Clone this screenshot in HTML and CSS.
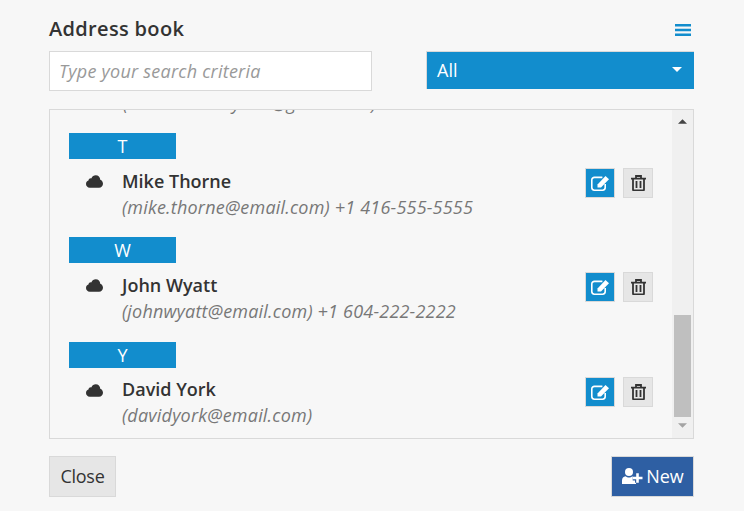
FILE: index.html
```html
<!DOCTYPE html>
<html lang="en">
<head>
<meta charset="utf-8">
<title>Address book</title>
<link rel="stylesheet" href="styles.css">
</head>
<body>
<div class="header">
  <h1 class="title">Address book</h1>
  <svg class="menu" viewBox="0 0 16 14" width="16" height="14"><path d="M0 1h16v2.400H0zM0 5.800h16v2.400H0zM0 10.600h16V13H0z" fill="#128dcd"/></svg>
</div>
<div class="filters">
  <input class="search" type="text" placeholder="Type your search criteria">
  <div class="select"><span>All</span><svg viewBox="0 0 10 5" width="10" height="5"><path d="M0 0h10L5 5z" fill="#fff"/></svg></div>
</div>
<div class="listbox">
  <div class="list">
    <div class="clipped">(daniel.lindsayhall@gmail.com)</div>
    <div class="group">
      <div class="letter">T</div>
      <div class="row">
        <svg class="cloud" viewBox="0 0 18 13" width="17" height="13"><path d="M4 13C1.700 13 0 11.300 0 9.100 0 7.400 1 6 2.600 5.400 2.900 3.800 4.200 2.900 5.600 3.200 6.500 1.200 8.300 0 10.300 0c2.700 0 4.700 2 4.800 4.600 1.700.6 2.900 2.300 2.900 4.200 0 2.400-1.800 4.200-4.200 4.200z" fill="#333"/></svg>
        <div class="info"><div class="name">Mike Thorne</div><div class="detail">(mike.thorne@email.com) +1 416-555-5555</div></div>
        <div class="actions">
          <button class="btn edit"><svg viewBox="0 0 19 16" width="19" height="16"><path d="M14.200 9v3.600a2.600 2.600 0 0 1-2.600 2.600H3.400a2.600 2.600 0 0 1-2.600-2.600V5a2.600 2.600 0 0 1 2.600-2.600h8" fill="none" stroke="#fff" stroke-width="1.600"/><path d="M6.500 9.500 14.500 1 18 4.200l-8 8.300H6.500z" fill="#fff"/></svg></button>
          <button class="btn trash"><svg viewBox="0 0 15 16" width="15" height="16"><path d="M5 3.300V1h5v2.300M0 3.600h15M2 3.600v10.900c0 .6.400 1 1 1h9c.6 0 1-.4 1-1V3.600M5.500 6v7M9.500 6v7" fill="none" stroke="#333" stroke-width="1.800"/></svg></button>
        </div>
      </div>
    </div>
    <div class="group">
      <div class="letter">W</div>
      <div class="row">
        <svg class="cloud" viewBox="0 0 18 13" width="17" height="13"><path d="M4 13C1.700 13 0 11.300 0 9.100 0 7.400 1 6 2.600 5.400 2.900 3.800 4.200 2.900 5.600 3.200 6.500 1.200 8.300 0 10.300 0c2.700 0 4.700 2 4.800 4.600 1.700.6 2.900 2.300 2.900 4.200 0 2.400-1.800 4.200-4.200 4.200z" fill="#333"/></svg>
        <div class="info"><div class="name">John Wyatt</div><div class="detail">(johnwyatt@email.com) +1 604-222-2222</div></div>
        <div class="actions">
          <button class="btn edit"><svg viewBox="0 0 19 16" width="19" height="16"><path d="M14.200 9v3.600a2.600 2.600 0 0 1-2.600 2.600H3.400a2.600 2.600 0 0 1-2.600-2.600V5a2.600 2.600 0 0 1 2.600-2.600h8" fill="none" stroke="#fff" stroke-width="1.600"/><path d="M6.500 9.500 14.500 1 18 4.200l-8 8.300H6.500z" fill="#fff"/></svg></button>
          <button class="btn trash"><svg viewBox="0 0 15 16" width="15" height="16"><path d="M5 3.300V1h5v2.300M0 3.600h15M2 3.600v10.900c0 .6.400 1 1 1h9c.6 0 1-.4 1-1V3.600M5.500 6v7M9.500 6v7" fill="none" stroke="#333" stroke-width="1.800"/></svg></button>
        </div>
      </div>
    </div>
    <div class="group">
      <div class="letter">Y</div>
      <div class="row">
        <svg class="cloud" viewBox="0 0 18 13" width="17" height="13"><path d="M4 13C1.700 13 0 11.300 0 9.100 0 7.400 1 6 2.600 5.400 2.900 3.800 4.200 2.900 5.600 3.200 6.500 1.200 8.300 0 10.300 0c2.700 0 4.700 2 4.800 4.600 1.700.6 2.900 2.300 2.900 4.200 0 2.400-1.800 4.200-4.200 4.200z" fill="#333"/></svg>
        <div class="info"><div class="name">David York</div><div class="detail">(davidyork@email.com)</div></div>
        <div class="actions">
          <button class="btn edit"><svg viewBox="0 0 19 16" width="19" height="16"><path d="M14.200 9v3.600a2.600 2.600 0 0 1-2.600 2.600H3.400a2.600 2.600 0 0 1-2.600-2.600V5a2.600 2.600 0 0 1 2.600-2.600h8" fill="none" stroke="#fff" stroke-width="1.600"/><path d="M6.500 9.500 14.500 1 18 4.200l-8 8.300H6.500z" fill="#fff"/></svg></button>
          <button class="btn trash"><svg viewBox="0 0 15 16" width="15" height="16"><path d="M5 3.300V1h5v2.300M0 3.600h15M2 3.600v10.900c0 .6.400 1 1 1h9c.6 0 1-.4 1-1V3.600M5.500 6v7M9.500 6v7" fill="none" stroke="#333" stroke-width="1.800"/></svg></button>
        </div>
      </div>
    </div>
  </div>
  <div class="scrollbar">
    <svg class="arrow" viewBox="0 0 10 5" width="9" height="5"><path d="M0 5h10L5 0z" fill="#444"/></svg>
    <div class="thumb"></div>
    <svg class="arrow" viewBox="0 0 10 5" width="9" height="5"><path d="M0 0h10L5 5z" fill="#a3a3a3"/></svg>
  </div>
</div>
<div class="footer">
  <button class="close">Close</button>
  <button class="new"><svg viewBox="0 0 21 16" width="21" height="16"><circle cx="7" cy="4" r="4" fill="#fff"/><path d="M0 16v-3.500C0 10 1.500 8.400 3.500 8.200 4.500 9 5.700 9.500 7 9.500s2.500-.5 3.500-1.300c2 .2 3.500 1.800 3.500 4.300V16z" fill="#fff"/><path d="M15.500 5.200v9.600M10.700 10h9.800" stroke="#2e5fa3" stroke-width="5"/><path d="M15.500 5.200v9.600M10.700 10h9.800" stroke="#fff" stroke-width="2.600"/></svg><span>New</span></button>
</div>
</body>
</html>
```
FILE: styles.css
```css
* { box-sizing: border-box; }
html, body { height: 100%; }
body {
  margin: 0;
  padding: 0 50px 0 49px;
  background: #f7f7f7;
  color: #333;
  font-family: "Open Sans", sans-serif;
  overflow: hidden;
}
.header {
  display: flex;
  justify-content: space-between;
  align-items: center;
  height: 51px;
  padding: 5px 3px 0 0;
}
.title { margin: 0; font-size: 20px; font-weight: 600; line-height: 27px; letter-spacing: .33px; }
.menu { display: block; margin-top: 4px; }
.filters { display: flex; justify-content: space-between; align-items: flex-start; height: 58px; }
.search {
  width: 323px;
  height: 40px;
  padding: 0 9px;
  border: 1px solid #d9d9d9;
  background: #fff;
  font: italic 18px "Open Sans", sans-serif;
  letter-spacing: .24px;
  outline: none;
}
.search::placeholder { color: #999; opacity: 1; }
.select {
  width: 268px;
  height: 38px;
  display: flex;
  justify-content: space-between;
  align-items: center;
  padding: 0 12px 2px 10px;
  background: #128dcd;
  border-top: 1px solid #d9d9d9;
  border-left: 1px solid #d9d9d9;
  color: #fff;
  font-size: 18px;
}
.listbox {
  display: flex;
  height: 330px;
  border: 1px solid #d9d9d9;
  overflow: hidden;
}
.list { flex: 1; min-width: 0; padding-left: 19px; overflow: hidden; }
.clipped {
  height: 42px;
  margin-top: -19px;
  padding-left: 54px;
  font-size: 18px;
  line-height: 25px;
  font-style: italic;
  color: #777;
  letter-spacing: .2px;
  white-space: nowrap;
}
.group { height: 104.3px; }
.letter {
  width: 107px;
  height: 26px;
  background: #128dcd;
  color: #fff;
  font-size: 18px;
  line-height: 27px;
  text-align: center;
}
.row { display: flex; padding-top: 9px; }
.cloud { flex: none; margin: 7px 1px 0 17px; }
.info { flex: 1; margin: -.4px 0 0 18px; }
.name { font-size: 18px; font-weight: 600; line-height: 26px; }
.detail { font-size: 18px; font-style: italic; line-height: 26px; color: #777; letter-spacing: .2px; white-space: nowrap; }
.actions { display: flex; gap: 8px; margin-right: 19px; }
.btn {
  width: 30px;
  height: 30px;
  display: flex;
  align-items: center;
  justify-content: center;
  padding: 0;
  border: 1px solid #d9d9d9;
}
.edit { background: #128dcd; }
.edit svg { margin-left: 1px; }
.trash { background: #e6e6e6; }
.scrollbar {
  flex: none;
  width: 21px;
  background: #f0f0f0;
  display: flex;
  flex-direction: column;
  align-items: center;
}
.arrow { flex: none; margin: 9px 0 0; }
.thumb { width: 17px; height: 102px; margin-top: 191px; background: #bfbfbf; }
.scrollbar .thumb + .arrow { margin-top: 6px; }
.footer { display: flex; justify-content: space-between; align-items: center; height: 72px; padding-top: 2px; }
.close, .new {
  height: 41px;
  border: 1px solid #d9d9d9;
  font: 18px "Open Sans", sans-serif;
  padding: 0;
}
.close { width: 67px; background: #e6e6e6; color: #333; letter-spacing: -.3px; }
.new {
  width: 83px;
  padding-left: 1px;
  background: #2e5fa3;
  color: #fff;
  display: flex;
  align-items: center;
  justify-content: center;
  gap: 3px;
}
```
